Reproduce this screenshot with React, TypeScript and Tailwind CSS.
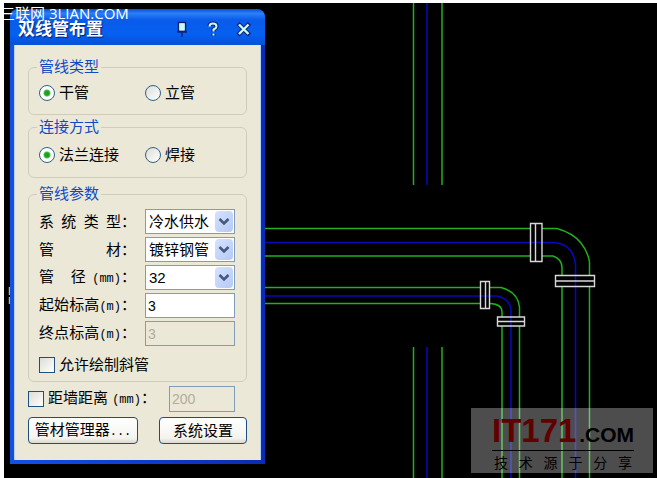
import type { ReactNode } from "react";

const CJK = "font-['Liberation_Sans','Noto_Sans_CJK_SC',sans-serif]";

function Group({ title, className, children }: { title: string; className: string; children: ReactNode }) {
  return (
    <fieldset className={`rounded-md border border-[#cfcdba] px-[10px] ${className}`}>
      <legend className="-ml-[2px] px-[2px] text-[15px] leading-4 text-[#1149c4]">{title}</legend>
      {children}
    </fieldset>
  );
}

function Radio({ name, label, defaultChecked }: { name: string; label: string; defaultChecked?: boolean }) {
  return (
    <label className="flex items-center gap-1">
      <input
        type="radio"
        name={name}
        defaultChecked={defaultChecked}
        className="h-4 w-4 shrink-0 appearance-none rounded-full border border-[#2f6186] bg-[linear-gradient(135deg,#dcdcd8,#ffffff)] checked:bg-[radial-gradient(circle,#1fa01f_0_2px,#4cc04c_3px,#ffffff_4px)]"
      />
      {label}
    </label>
  );
}

function Check({ label }: { label: ReactNode }) {
  return (
    <label className="flex items-center gap-1">
      <input
        type="checkbox"
        className="h-4 w-4 shrink-0 appearance-none border border-[#1c5180] bg-[linear-gradient(135deg,#dcdcd8,#ffffff)]"
      />
      <span>{label}</span>
    </label>
  );
}

function Unit({ children }: { children: string }) {
  return <span className="font-['Liberation_Mono',monospace] text-[12px]">{children}</span>;
}

function Row({ id, label, children }: { id: string; label: ReactNode; children: ReactNode }) {
  return (
    <div className="flex h-[25px] items-center">
      <label htmlFor={id} className="flex w-[106px] shrink-0">
        <span className="w-[82px] whitespace-nowrap [text-align-last:justify]">{label}</span>
        <span>：</span>
      </label>
      {children}
    </div>
  );
}

function Select({ id, value }: { id: string; value: string }) {
  return (
    <div className="relative h-full w-[90px]">
      <select id={id} className="h-full w-full appearance-none border border-[#7f9db9] bg-white pl-[3px] text-[15px] leading-5">
        <option>{value}</option>
      </select>
      <span className="pointer-events-none absolute inset-y-[2px] right-[2px] flex w-[18px] items-center justify-center rounded-sm bg-[linear-gradient(135deg,#d6e2fd,#b4c9f6)]">
        <svg width="12" height="8" viewBox="0 0 12 8" fill="none" stroke="#43597f" strokeWidth="2.6">
          <path d="M1.5 1 L6 5.5 L10.5 1" />
        </svg>
      </span>
    </div>
  );
}

const field = "border border-[#7f9db9] bg-white pl-[2px] text-[14px] disabled:bg-[#ebe8d8] disabled:text-[#b0ad9c]";
const button =
  "h-[27px] rounded-[4px] border border-[#1c4f80] bg-[linear-gradient(#ffffff,#f4f3ee_80%,#dcd8cc)] text-[15px] leading-5 whitespace-nowrap";

function Drawing() {
  return (
    <svg className="absolute top-0 left-0" width="653" height="475" viewBox="4 3 653 475" fill="none">
      <g stroke="#20b020" strokeWidth="1.5">
        <path d="M413.5 3V185M442 3V185M413.5 347V478M442 347V478" />
        <path d="M260 228.5H530M542 228.5H557Q573 233 581 243Q588 252 589.5 262V276M589.5 286V478" />
        <path d="M260 256H530M542 256H553Q562 259 562 268V276M562 286V478" />
        <path d="M260 287.5H480M490 287.5H501Q518 292 519.5 307V317M519.5 326V478" />
        <path d="M260 303.5H480M490 303.5Q502 304 502 312V317M502 326V478" />
      </g>
      <g stroke="#0808b8" strokeWidth="1.6">
        <path d="M427 3V185M427 347V478" />
        <path d="M260 242.5H554Q573 244 575.5 264V478" />
        <path d="M260 296H497Q510 299 511 310V478" />
      </g>
      <g stroke="#d8d8d8" strokeWidth="1.4">
        <path d="M530.5 223.5H542V261.5H530.5ZM535.5 223.5V261.5" />
        <path d="M555.5 275.5H594.5V286.5H555.5ZM555.5 281H594.5" />
        <path d="M480.5 281.5H489.5V308.5H480.5ZM485.5 281.5V308.5" />
        <path d="M497.5 317H524.5V326H497.5ZM497.5 321.5H524.5" />
      </g>
      <path d="M9.5 287V295M9.5 297V304" stroke="#b8bd62" strokeWidth="1.5" />
    </svg>
  );
}

function TitleBar() {
  return (
    <header className="flex h-9 items-center justify-between bg-[linear-gradient(#0a4fd0,#2a80f8_12%,#0a5bea_30%,#0560f0_70%,#0550d8)] pr-[11px] pl-2">
      <h1 className="pt-[6px] text-[17px] leading-6 font-bold text-white [text-shadow:1px_1px_1px_#0a1c70]">双线管布置</h1>
      <div className="flex items-center gap-[11px] pt-1">
        <button aria-label="固定" className="flex w-5 justify-center">
          <svg width="14" height="18" viewBox="0 0 14 18">
            <path d="M3.5 2.5H10.5V11H3.5ZM2 12H12M7 12V17" fill="#c9fbf4" stroke="#10207c" strokeWidth="1.5" />
            <path d="M4.5 3.5H9.5V10.5H4.5Z" fill="#c9fbf4" />
          </svg>
        </button>
        <button aria-label="帮助" className="flex w-5 justify-center">
          <svg width="16" height="18" viewBox="0 0 16 18" fill="none">
            <path d="M4.5 6Q4.5 3.5 8 3.5T11.5 6.5Q11.5 8 8.5 9.5V11.5M8.5 13.5V15.5" stroke="#10207c" strokeWidth="4" />
            <path d="M4.5 6.5Q4.5 3.5 8 3.5T11.5 6.5Q11.5 8 8.5 9.5V11.5M8.5 13.5V15.5" stroke="#c9fbf4" strokeWidth="2" />
          </svg>
        </button>
        <button aria-label="关闭" className="flex w-5 justify-center">
          <svg width="16" height="18" viewBox="0 0 16 18" fill="none">
            <path d="M2 3.5L13.5 15M13.5 3.5L2 15" stroke="#10207c" strokeWidth="4.4" />
            <path d="M3 4.5L12.5 14M12.5 4.5L3 14" stroke="#c9fbf4" strokeWidth="2.4" />
          </svg>
        </button>
      </div>
    </header>
  );
}

export default function App() {
  return (
    <main className={`min-h-screen bg-white pt-[3px] pl-1 ${CJK}`}>
      <div className="relative flex min-h-[475px] items-start bg-black pt-[6px] pl-[6px]">
        <Drawing />
        <section className="relative w-[255px] overflow-hidden rounded-t-lg bg-[linear-gradient(90deg,#1450e6,#0a2cb4)] text-[15px] leading-5 text-black">
          <TitleBar />
          <form className="mr-1 mb-1 ml-1 border-x border-[#b9d0f5] bg-[#ebe8d8] px-[13px] pt-[14px] pb-4">
            <Group title="管线类型" className="h-[56px]">
              <div className="grid grid-cols-[106px_1fr] pt-2">
                <Radio name="kind" label="干管" defaultChecked />
                <Radio name="kind" label="立管" />
              </div>
            </Group>
            <Group title="连接方式" className="mt-1 h-[59px]">
              <div className="grid grid-cols-[106px_1fr] pt-[10px]">
                <Radio name="joint" label="法兰连接" defaultChecked />
                <Radio name="joint" label="焊接" />
              </div>
            </Group>
            <Group title="管线参数" className="mt-2 h-[196px]">
              <div className="flex flex-col gap-[3px] pt-[7px]">
                <Row id="system" label="系 统 类 型">
                  <Select id="system" value="冷水供水" />
                </Row>
                <Row id="material" label="管 材">
                  <Select id="material" value="镀锌钢管" />
                </Row>
                <Row id="diameter" label={<>管 径<Unit>(mm)</Unit></>}>
                  <Select id="diameter" value="32" />
                </Row>
                <Row id="start" label={<>起始标高<Unit>(m)</Unit></>}>
                  <input id="start" defaultValue="3" className={`h-full w-[90px] ${field}`} />
                </Row>
                <Row id="end" label={<>终点标高<Unit>(m)</Unit></>}>
                  <input id="end" defaultValue="3" disabled className={`h-full w-[90px] ${field}`} />
                </Row>
                <div className="pt-[6px]">
                  <Check label="允许绘制斜管" />
                </div>
              </div>
            </Group>
            <div className="mt-1 flex items-center justify-between pr-3">
              <Check label={<>距墙距离 <Unit>(mm)</Unit>：</>} />
              <input aria-label="距墙距离" defaultValue="200" disabled className={`h-[26px] w-[66px] ${field}`} />
            </div>
            <div className="mt-[5px] flex justify-between">
              <button type="button" className={`w-[110px] ${button}`}>
                管材管理器<span className="font-['Liberation_Mono',monospace] text-[12px]">...</span>
              </button>
              <button type="button" className={`w-[88px] ${button}`}>系统设置</button>
            </div>
          </form>
        </section>
        <p className="absolute top-0 -left-1 font-['Open_Sans','Noto_Sans_CJK_SC',sans-serif] text-[15px] leading-5 whitespace-nowrap text-white">
          三联网 3LIAN.COM
        </p>
        <aside className="absolute right-1 bottom-[5px] h-[65px] w-[182px] bg-white/30 pt-1 pr-[19px] pl-[21px] text-black">
          <p className="flex h-[38px] items-baseline justify-between leading-[38px] font-bold">
            <span className="text-[33px] text-[#600000]">IT171</span>
            <span className="text-[21px]">.COM</span>
          </p>
          <p className="border-t border-black px-[2px] pt-[2px] text-[14px] leading-5 [text-align-last:justify]">
            技 术 源 于 分 享
          </p>
        </aside>
      </div>
    </main>
  );
}
